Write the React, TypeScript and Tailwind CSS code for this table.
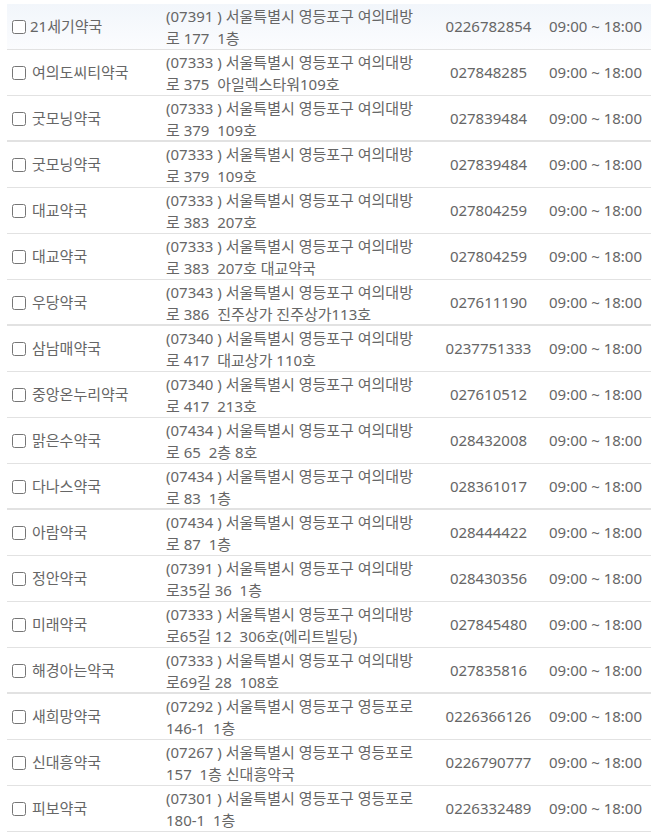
import React from 'react'

type Pharmacy = {
  name: string
  zip: string
  address: string
  tel: string
  tight?: boolean
}

const pharmacies: Pharmacy[] = [
  { name: '21세기약국', zip: '07391', address: '서울특별시 영등포구 여의대방로 177  1층', tel: '0226782854', tight: true },
  { name: '여의도씨티약국', zip: '07333', address: '서울특별시 영등포구 여의대방로 375  아일렉스타워109호', tel: '027848285' },
  { name: '굿모닝약국', zip: '07333', address: '서울특별시 영등포구 여의대방로 379  109호', tel: '027839484' },
  { name: '굿모닝약국', zip: '07333', address: '서울특별시 영등포구 여의대방로 379  109호', tel: '027839484' },
  { name: '대교약국', zip: '07333', address: '서울특별시 영등포구 여의대방로 383  207호', tel: '027804259' },
  { name: '대교약국', zip: '07333', address: '서울특별시 영등포구 여의대방로 383  207호 대교약국', tel: '027804259' },
  { name: '우당약국', zip: '07343', address: '서울특별시 영등포구 여의대방로 386  진주상가 진주상가113호', tel: '027611190' },
  { name: '삼남매약국', zip: '07340', address: '서울특별시 영등포구 여의대방로 417  대교상가 110호', tel: '0237751333' },
  { name: '중앙온누리약국', zip: '07340', address: '서울특별시 영등포구 여의대방로 417  213호', tel: '027610512' },
  { name: '맑은수약국', zip: '07434', address: '서울특별시 영등포구 여의대방로 65  2층 8호', tel: '028432008' },
  { name: '다나스약국', zip: '07434', address: '서울특별시 영등포구 여의대방로 83  1층', tel: '028361017' },
  { name: '아람약국', zip: '07434', address: '서울특별시 영등포구 여의대방로 87  1층', tel: '028444422' },
  { name: '정안약국', zip: '07391', address: '서울특별시 영등포구 여의대방로35길 36  1층', tel: '028430356' },
  { name: '미래약국', zip: '07333', address: '서울특별시 영등포구 여의대방로65길 12  306호(에리트빌딩)', tel: '027845480' },
  { name: '해경아는약국', zip: '07333', address: '서울특별시 영등포구 여의대방로69길 28  108호', tel: '027835816' },
  { name: '새희망약국', zip: '07292', address: '서울특별시 영등포구 영등포로 146-1  1층', tel: '0226366126' },
  { name: '신대흥약국', zip: '07267', address: '서울특별시 영등포구 영등포로 157  1층 신대흥약국', tel: '0226790777' },
  { name: '피보약국', zip: '07301', address: '서울특별시 영등포구 영등포로 180-1  1층', tel: '0226332489' },
]

function Row({ item, index }: { item: Pharmacy; index: number }) {
  const thick = index % 4 === 2
  return (
    <div
      className={`grid grid-cols-[154px_278px_99px_113px] h-[46px] items-center border-[#e2e2e2] ${thick ? 'border-b-2' : 'border-b'} ${index === 0 ? 'bg-gradient-to-b from-[#f2f6fb] to-[#fbfcfe]' : ''}`}
    >
      <label className="flex items-center pl-[5px]">
        <input type="checkbox" className="w-[14px] h-[14px] m-0" />
        <span className={item.tight ? 'ml-[4px]' : 'ml-[6px]'}>{item.name}</span>
      </label>
      <div className="pl-[5px] pt-[1px]">
        <div className="w-[254px] whitespace-pre-wrap leading-[22px]">
          ({item.zip} ) {item.address}
        </div>
      </div>
      <div className="text-center">{item.tel}</div>
      <div className="text-center pl-[2px]">09:00 ~ 18:00</div>
    </div>
  )
}

export default function App() {
  return (
    <div
      className="w-[651px] h-[837px] bg-white text-[15px] text-[#666666] overflow-hidden"
      style={{ fontFamily: '"Noto Sans", "Noto Sans CJK KR", sans-serif' }}
    >
      <div className="ml-[7px] pt-[4px]">
        {pharmacies.map((p, i) => (
          <Row key={i} item={p} index={i} />
        ))}
      </div>
    </div>
  )
}
